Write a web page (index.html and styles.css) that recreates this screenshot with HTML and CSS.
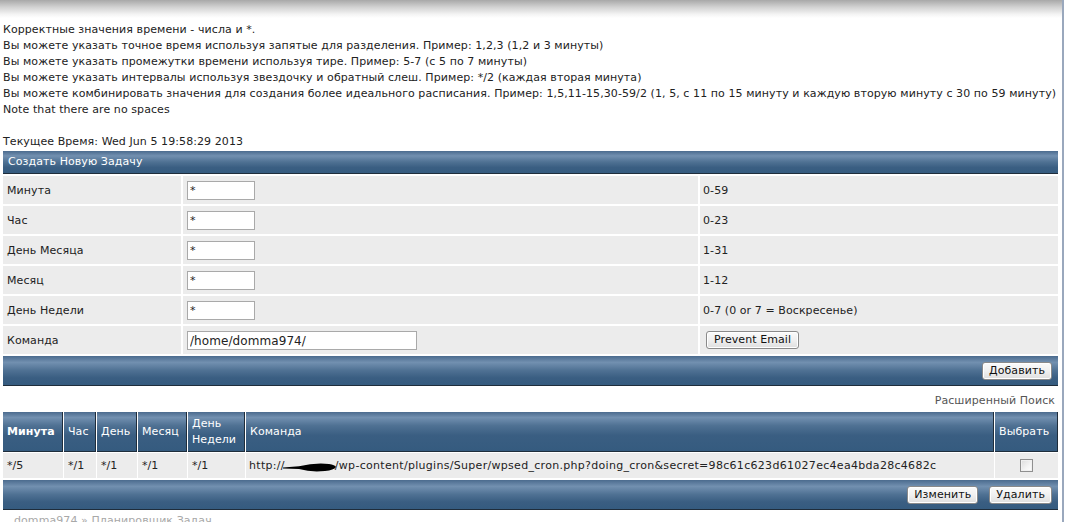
FILE: index.html
```html
<!DOCTYPE html>
<html lang="ru">
<head>
<meta charset="utf-8">
<title>Планировщик Задач</title>
<link rel="stylesheet" href="styles.css">
</head>
<body>
<div class="page">
  <div class="topshade"></div>
  <div class="content">
    <div class="help">
      <div>Корректные значения времени - числа и *.</div>
      <div>Вы можете указать точное время используя запятые для разделения. Пример: 1,2,3 (1,2 и 3 минуты)</div>
      <div>Вы можете указать промежутки времени используя тире. Пример: 5-7 (с 5 по 7 минуты)</div>
      <div>Вы можете указать интервалы используя звездочку и обратный слеш. Пример: */2 (каждая вторая минута)</div>
      <div>Вы можете комбинировать значения для создания более идеального расписания. Пример: 1,5,11-15,30-59/2 (1, 5, с 11 по 15 минуту и каждую вторую минуту с 30 по 59 минуту)</div>
      <div>Note that there are no spaces</div>
      <div class="blank"></div>
      <div>Текущее Время: Wed Jun 5 19:58:29 2013</div>
    </div>

    <div class="panel">
      <div class="panel-head">Создать Новую Задачу</div>
      <div class="form-row"><div class="cell">Минута</div><div class="cell"><input class="field" type="text" value="*"></div><div class="cell hint">0-59</div></div>
      <div class="form-row"><div class="cell">Час</div><div class="cell"><input class="field" type="text" value="*"></div><div class="cell hint">0-23</div></div>
      <div class="form-row"><div class="cell">День Месяца</div><div class="cell"><input class="field" type="text" value="*"></div><div class="cell hint">1-31</div></div>
      <div class="form-row"><div class="cell">Месяц</div><div class="cell"><input class="field" type="text" value="*"></div><div class="cell hint">1-12</div></div>
      <div class="form-row"><div class="cell">День Недели</div><div class="cell"><input class="field" type="text" value="*"></div><div class="cell hint">0-7 (0 or 7 = Воскресенье)</div></div>
      <div class="form-row"><div class="cell">Команда</div><div class="cell"><input class="field field-wide" type="text" value="/home/domma974/"></div><div class="cell hint"><button class="btn btn-inline" type="button">Prevent Email</button></div></div>
      <div class="panel-foot"><button class="btn" type="button">Добавить</button></div>
    </div>

    <div class="adv">Расширенный Поиск</div>

    <div class="list">
      <div class="list-row list-head">
        <div class="th bold">Минута</div>
        <div class="th">Час</div>
        <div class="th">День</div>
        <div class="th">Месяц</div>
        <div class="th">День<br>Недели</div>
        <div class="th">Команда</div>
        <div class="th">Выбрать</div>
      </div>
      <div class="list-row list-data">
        <div class="td">*/5</div>
        <div class="td">*/1</div>
        <div class="td">*/1</div>
        <div class="td">*/1</div>
        <div class="td">*/1</div>
        <div class="td cmd">http://<span class="redact"><svg width="56" height="14" viewBox="0 0 56 14"><path d="M0 8.6 L16 7.2 Q32 3.5 46 5 Q52 6 53 8 Q51 11 42 12 Q28 13.5 16 10 L0 9.6 Z" fill="#000"/></svg></span>/wp-content/plugins/Super/wpsed_cron.php?doing_cron&amp;secret=98c61c623d61027ec4ea4bda28c4682c</div>
        <div class="td center"><input class="check" type="checkbox"></div>
      </div>
      <div class="panel-foot list-foot"><button class="btn" type="button">Изменить</button><button class="btn" type="button">Удалить</button></div>
    </div>

    <div class="crumbs">domma974 » Планировщик Задач</div>
  </div>
</div>
</body>
</html>
```
FILE: styles.css
```css
html, body {
  margin: 0;
  padding: 0;
  background: #fff;
  overflow: hidden;
}
body {
  font-family: "DejaVu Sans", Verdana, sans-serif;
  font-size: 11px;
  letter-spacing: 0.08px;
  color: #222;
}
.page {
  width: 1062px;
  height: 522px;
  border-right: 2px solid #9aa8bd;
  overflow: hidden;
}
.topshade {
  height: 18px;
  background: linear-gradient(to bottom, #a8a8a8 0%, #d2d2d2 40%, #f4f4f4 80%, #fff 100%);
}
.content {
  padding: 4px 0 0 3px;
  width: 1055px;
}
.help {
  line-height: 16px;
}
.blank {
  height: 16px;
}
.panel {
  margin-top: 1px;
  background: #fff;
}
.panel-head {
  height: 22px;
  line-height: 22px;
  padding-left: 5px;
  color: #fff;
  background: linear-gradient(to bottom, #4b6b8e 0%, #7290b0 22%, #4f7193 50%, #3a5e82 75%, #355b7f 100%);
  border-bottom: 1px solid #1f2d3b;
}
.form-row {
  display: grid;
  grid-template-columns: 178px 515px 1fr;
  column-gap: 2px;
  margin-top: 2px;
}
.form-row:first-of-type {
  margin-top: 1px;
}
.cell {
  height: 28px;
  background: #ececec;
  display: flex;
  align-items: center;
  padding-left: 4px;
}
.hint {
  padding-left: 3px;
}
.field {
  box-sizing: border-box;
  width: 68px;
  height: 19px;
  border: 1px solid #a9a9a9;
  background: #fff;
  font-family: "DejaVu Sans", Verdana, sans-serif;
  font-size: 11px;
  letter-spacing: 0.08px;
  color: #222;
  padding: 1px 2px 0;
  margin: 0;
}
.field-wide {
  width: 230px;
  font-size: 12px;
}
.btn {
  font-family: "DejaVu Sans", Verdana, sans-serif;
  font-size: 11px;
  letter-spacing: 0.08px;
  color: #111;
  height: 18px;
  padding: 0 6px;
  border: 1px solid #8a8a8a;
  border-radius: 3px;
  background: linear-gradient(to bottom, #fbfbfb 0%, #f0f0f0 50%, #dedede 100%);
  box-shadow: inset 0 0 0 1px #fff;
  line-height: 14px;
  margin: 0;
}
.btn-inline {
  margin-left: 3px;
  padding: 0 7px;
}
.panel-foot {
  margin-top: 2px;
  height: 29px;
  border-bottom: 1px solid #1f2d3b;
  background: linear-gradient(to bottom, #4b6b8e 0%, #7290b0 22%, #4f7193 50%, #3a5e82 75%, #355b7f 100%);
  display: flex;
  justify-content: flex-end;
  align-items: center;
  gap: 11px;
  padding-right: 6px;
}
.adv {
  text-align: right;
  color: #555;
  padding-right: 3px;
  line-height: 16px;
  margin-top: 7px;
}
.list {
  margin-top: 3px;
}
.list-row {
  display: grid;
  grid-template-columns: 60px 32px 40px 49px 57px 748px 1fr;
  column-gap: 1px;
}
.th {
  height: 39px;
  color: #fff;
  display: flex;
  align-items: center;
  padding-left: 4px;
  line-height: 16px;
  border-right: 1px solid #1f2d3b;
  border-bottom: 1px solid #1f2d3b;
  background: linear-gradient(to bottom, #4b6b8e 0%, #7290b0 14%, #4f7193 35%, #3a5e82 60%, #355b7f 100%);
}
.bold {
  font-weight: bold;
}
.list-data {
  margin-top: 1px;
}
.td {
  height: 25px;
  background: #ececec;
  display: flex;
  align-items: center;
  padding-left: 4px;
  white-space: nowrap;
}
.cmd {
  padding-left: 3px;
  letter-spacing: 0.3px;
}
.center {
  justify-content: center;
  padding-left: 0;
}
.redact {
  display: inline-block;
  width: 56px;
  height: 14px;
  margin: 0 -4px 0 -2px;
  vertical-align: middle;
}
.redact svg {
  display: block;
}
.check {
  appearance: none;
  -webkit-appearance: none;
  width: 13px;
  height: 13px;
  margin: 0;
  border: 1px solid #8f8f8f;
  background: linear-gradient(135deg, #dcdcdc 0%, #f4f4f4 60%, #fff 100%);
  box-shadow: inset 0 0 0 1px #f0f0f0;
}
.list-foot {
  margin-top: 2px;
}
.crumbs {
  margin-top: 3px;
  padding-left: 11px;
  color: #a8a8a8;
  line-height: 16px;
}
```
